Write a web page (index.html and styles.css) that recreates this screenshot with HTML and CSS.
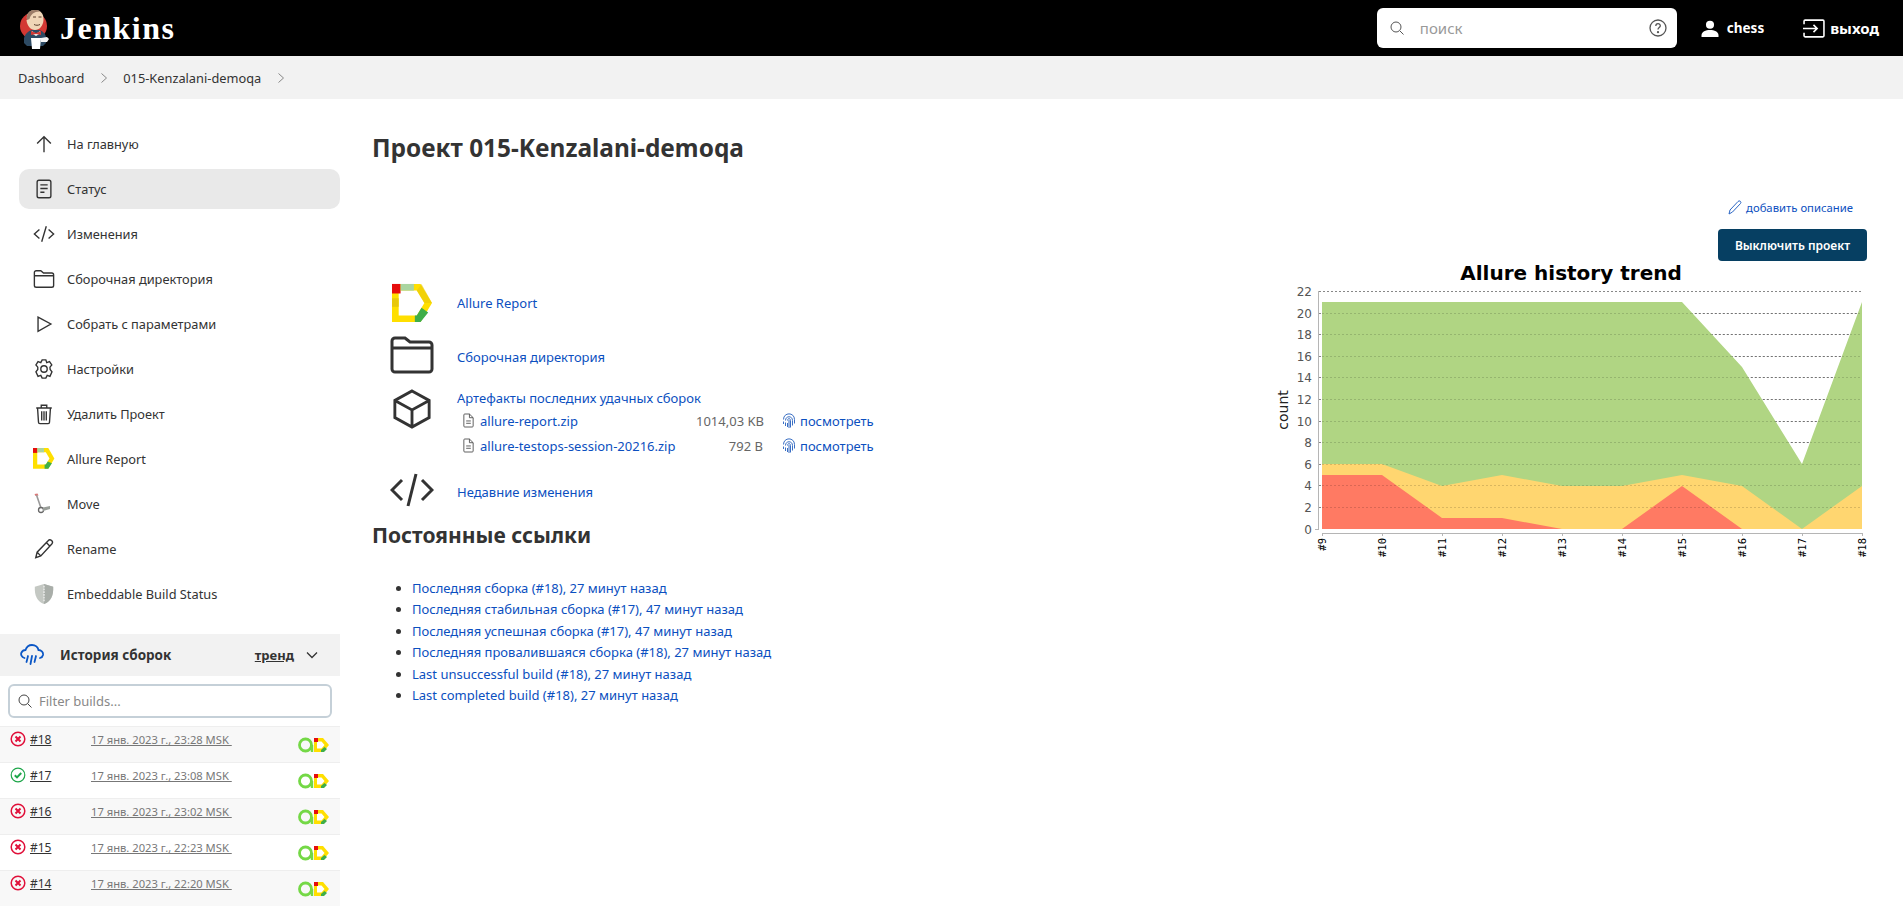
FILE: index.html
```html
<!DOCTYPE html>
<html>
<head>
  <title>015-Kenzalani-demoqa - Jenkins</title>
  <link rel="stylesheet" href="styles.css">
</head>
<body>

  <header class="topbar">
    <div class="brand">
      <svg class="butler" width="32" height="40" viewBox="0 0 32 40">
        <circle cx="14.5" cy="17" r="13.5" fill="#d33833"/>
        <path d="M5 29c1-4 4-7 8-8h7c4 1 7 4 7 8v5l-3 3H8l-3-3z" fill="#2d4a63"/>
        <path d="M13 22l4 3 4-3 1 2-5 3-5-3z" fill="#f2f2f2"/>
        <path d="M12 22l5 2 5-2v4l-5-1-5 1z" fill="#d33833"/>
        <path d="M8 11C7 4 11 1 16 1s9 3 8.500 10c-.4 6-4 10-8.500 10-4.200 0-8-4-8.500-10z" fill="#f0d6b7"/>
        <path d="M8 11C7 4 11 1 16 1c2 0 4 .5 5.500 1.500C16 2 11.500 5 10.500 10z" fill="#9c7d68"/>
        <path d="M14 8h3M19.500 8h3M15 15.500c2 1 4 1 6 0" fill="none" stroke="#5a3d2b"/>
        <path d="M12 29h10l-1 11h-8z" fill="#fff"/>
        <path d="M22 29l6-1 2 2-2 3-6 0z" fill="#f4f4f4"/>
      </svg>
      <span class="brand-name">Jenkins</span>
    </div>
    <div class="search">
      <svg width="16" height="16" viewBox="0 0 16 16" fill="none" stroke="#555"><circle cx="7" cy="7" r="5"/><path d="M11 11l3.500 3.500"/></svg>
      <span class="search-text">поиск</span>
      <svg width="18" height="18" viewBox="0 0 18 18" fill="none" stroke="#555" stroke-width="1.300"><circle cx="9" cy="9" r="8"/><path d="M6.800 7c0-3 4.500-3 4.500-.2 0 1.800-2.300 1.800-2.300 3.700"/><circle cx="9" cy="13.200" r=".5"/></svg>
    </div>
    <a class="top-link user">
      <svg width="18" height="17" viewBox="0 0 16 16" fill="#fff"><circle cx="8" cy="4.500" r="3.800"/><path d="M0 16v-1.500C0 11 4 9.500 8 9.500s8 1.500 8 5V16z"/></svg>
      chess
    </a>
    <a class="top-link logout">
      <svg width="22" height="19" viewBox="0 0 21 18" fill="none" stroke="#fff" stroke-width="1.500"><path d="M1 5V2a1 1 0 0 1 1-1h17a1 1 0 0 1 1 1v14a1 1 0 0 1-1 1H2a1 1 0 0 1-1-1v-3"/><path d="M0 9h13M10 5.500L13.500 9 10 12.500"/></svg>
      выход
    </a>
  </header>

  <nav class="breadcrumbs">
    <a>Dashboard</a>
    <svg width="8" height="12" viewBox="0 0 8 12" fill="none" stroke="#888"><path d="M1.500 1.500L6.500 6l-5 4.500"/></svg>
    <a>015-Kenzalani-demoqa</a>
    <svg width="8" height="12" viewBox="0 0 8 12" fill="none" stroke="#888"><path d="M1.500 1.500L6.500 6l-5 4.500"/></svg>
  </nav>

  <div class="page">
    <aside class="sidebar">
      <ul class="tasks">
        <li class="task">
          <svg class="task-icon" viewBox="0 0 24 24"><path d="M12 21V4M4.500 11.500L12 4l7.500 7.500"/></svg>
          На главную
        </li>
        <li class="task active">
          <svg class="task-icon" viewBox="0 0 24 24"><rect x="4.500" y="2.500" width="15" height="19" rx="2"/><path d="M8 7.500h8M8 11.500h8M8 15.500h4.500"/></svg>
          Статус
        </li>
        <li class="task">
          <svg class="task-icon" viewBox="0 0 24 24"><path d="M7 7l-5.500 5L7 17M17 7l5.500 5L17 17M14.500 3.500l-5 17"/></svg>
          Изменения
        </li>
        <li class="task">
          <svg class="task-icon" viewBox="0 0 24 24"><path d="M1.500 6V5a2 2 0 0 1 2-2h5l3 2.500h9a2 2 0 0 1 2 2V19a2 2 0 0 1-2 2h-17a2 2 0 0 1-2-2zM1.500 8.500h21"/></svg>
          Сборочная директория
        </li>
        <li class="task">
          <svg class="task-icon" viewBox="0 0 24 24"><path d="M5.500 4.500L19.500 12 5.500 20z"/></svg>
          Собрать с параметрами
        </li>
        <li class="task">
          <svg class="task-icon" viewBox="0 0 24 24"><circle cx="12" cy="12" r="3.500"/><path d="M10 2h4l1 3 3-1 2.500 3.500-2 2.500.2 2.500 2 2.500L18.500 20l-3-1-1.500 3h-4l-1.500-3-3 1L3.200 15l2-2.500V10l-2-2.500L5.500 4l3 1z"/></svg>
          Настройки
        </li>
        <li class="task">
          <svg class="task-icon" viewBox="0 0 24 24"><path d="M5 6l1 15a1.500 1.500 0 0 0 1.500 1.500h9A1.500 1.500 0 0 0 18 21l1-15M3.500 5.500h17M9 5V2.500h6V5M9.500 9v10M12 9v10M14.500 9v10"/></svg>
          Удалить Проект
        </li>
        <li class="task">
          <svg class="task-icon plain" viewBox="3 3 36 36"><path d="M3 3h25l10 17-10 17H3z" fill="#ffdf00"/><path d="M10 10h14l6 10-6 10H10z" fill="#fff"/><rect x="3" y="3" width="7" height="8" fill="#e60c0c"/><path d="M10 3h11v7H10z" fill="#a9d5a0"/><path d="M22 37v-7h2l3-5 7 3-6 9z" fill="#3fae49"/></svg>
          Allure Report
        </li>
        <li class="task">
          <svg class="task-icon plain" viewBox="0 0 22 22"><path d="M1.500 1l3-.5 1 2-3 .5z" fill="#d77"/><path d="M3.500 2L8 15" stroke="#9a9a9a" stroke-width="1.600"/><circle cx="8" cy="17" r="2.500" fill="#fff" stroke="#666" stroke-width="1.300"/><path d="M10 14.500l7-1.500v3l-7 2z" fill="#9a9f9a"/></svg>
          Move
        </li>
        <li class="task">
          <svg class="task-icon" viewBox="0 0 24 24"><path d="M3 21.500l1.500-6L16.500 3a2.500 2.500 0 0 1 4 3.500L8.500 19.500zM4.500 15.500l4 4M14.500 5l4 4"/></svg>
          Rename
        </li>
        <li class="task">
          <svg class="task-icon plain" viewBox="0 0 24 24"><path d="M12 1l10 3c.5 10-2.500 16-10 19C4.500 20 1.500 14 2 4z" fill="#c4c8c3"/><path d="M12 1l10 3c.5 10-2.500 16-10 19z" fill="#a9aea9"/><path d="M12 3v18" stroke="#eee" stroke-dasharray="2 1"/></svg>
          Embeddable Build Status
        </li>
      </ul>

      <section class="history">
        <div class="history-head">
          <svg width="24" height="22" viewBox="0 0 24 22" fill="none" stroke="#0b57c6" stroke-width="1.800" stroke-linecap="round"><path d="M4.500 14C1.500 13 .5 10.500 1.500 8.500s3-2.500 4-2.500C6.500 3 9 1 12 1c3.500 0 6 2.500 6.500 5 2.500 0 5 2 4.500 5-.3 1.500-1.300 2.500-3 3"/><path d="M8 12l-1.500 6M12 12l-1.500 8M16 12l-1.500 6"/></svg>
          <span class="history-title">История сборок</span>
          <a class="trend">тренд</a>
          <svg width="12" height="8" viewBox="0 0 12 8" fill="none" stroke="#333" stroke-width="1.300"><path d="M1 1.500l5 5 5-5"/></svg>
        </div>
        <div class="filter">
          <svg width="14" height="14" viewBox="0 0 14 14" fill="none" stroke="#444"><circle cx="6" cy="6" r="5"/><path d="M9.700 9.700L13.500 13.500"/></svg>
          Filter builds...
        </div>
        <div class="builds">
          <div class="build">
            <svg class="status" viewBox="0 0 16 16"><circle cx="8" cy="8" r="6.800" class="fail"/><path d="M5.500 5.500l5 5M10.500 5.500l-5 5" class="fail heavy"/></svg>
            <a class="build-num">#18</a>
            <a class="build-time">17 янв. 2023 г., 23:28 MSK&nbsp;</a>
            <svg class="allure-badge" viewBox="0 0 32 16"><use href="#badge"/></svg>
          </div>
          <div class="build">
            <svg class="status" viewBox="0 0 16 16"><circle cx="8" cy="8" r="6.800" class="ok"/><path d="M4.800 8.200l2.200 2.200 4.200-4.400" class="ok heavy"/></svg>
            <a class="build-num">#17</a>
            <a class="build-time">17 янв. 2023 г., 23:08 MSK&nbsp;</a>
            <svg class="allure-badge" viewBox="0 0 32 16"><use href="#badge"/></svg>
          </div>
          <div class="build">
            <svg class="status" viewBox="0 0 16 16"><circle cx="8" cy="8" r="6.800" class="fail"/><path d="M5.500 5.500l5 5M10.500 5.500l-5 5" class="fail heavy"/></svg>
            <a class="build-num">#16</a>
            <a class="build-time">17 янв. 2023 г., 23:02 MSK&nbsp;</a>
            <svg class="allure-badge" viewBox="0 0 32 16"><use href="#badge"/></svg>
          </div>
          <div class="build">
            <svg class="status" viewBox="0 0 16 16"><circle cx="8" cy="8" r="6.800" class="fail"/><path d="M5.500 5.500l5 5M10.500 5.500l-5 5" class="fail heavy"/></svg>
            <a class="build-num">#15</a>
            <a class="build-time">17 янв. 2023 г., 22:23 MSK&nbsp;</a>
            <svg class="allure-badge" viewBox="0 0 32 16"><use href="#badge"/></svg>
          </div>
          <div class="build">
            <svg class="status" viewBox="0 0 16 16"><circle cx="8" cy="8" r="6.800" class="fail"/><path d="M5.500 5.500l5 5M10.500 5.500l-5 5" class="fail heavy"/></svg>
            <a class="build-num">#14</a>
            <a class="build-time">17 янв. 2023 г., 22:20 MSK&nbsp;</a>
            <svg class="allure-badge" viewBox="0 0 32 16"><use href="#badge"/></svg>
          </div>
        </div>
      </section>
    </aside>

    <main class="main">
      <h1 class="page-title">Проект 015-Kenzalani-demoqa</h1>

      <div class="columns">
        <div class="left">
          <div class="link-row">
            <svg class="big-icon" viewBox="0 0 44 42"><path d="M1 1h30l12 20-12 20H1z" fill="#ffdf00"/><path d="M8 8h19l8 13-8 13H8z" fill="#fff"/><rect x="1" y="1" width="9" height="10" fill="#e60c0c"/><path d="M10 1h14v7H10z" fill="#a9d5a0"/><path d="M1 16h7v9H1z" fill="#e8c80c"/><path d="M27 8l5-7 11 20h-8z" fill="#e8c80c" opacity=".6"/><path d="M25 41v-7h2l5-8 7 5-8 10z" fill="#3fae49"/></svg>
            <a class="row-link">Allure Report</a>
          </div>
          <div class="link-row folder-row">
            <svg class="big-icon stroke" viewBox="0 0 44 38"><path d="M2 7V5a3 3 0 0 1 3-3h10l5 4h19a3 3 0 0 1 3 3v24a3 3 0 0 1-3 3H5a3 3 0 0 1-3-3zM2 12h40"/></svg>
            <a class="row-link">Сборочная директория</a>
          </div>
          <div class="link-row artifacts-row">
            <svg class="big-icon stroke" viewBox="0 0 44 42"><path d="M22 2l18 10v18L22 40 4 30V12zM4 12l18 10 18-10M22 22v18"/></svg>
            <div>
              <a class="row-link">Артефакты последних удачных сборок</a>
              <div class="artifact">
                <svg class="file-icon" viewBox="0 0 14 16"><path d="M3 1h5l4 4v9a1 1 0 0 1-1 1H3a1 1 0 0 1-1-1V2a1 1 0 0 1 1-1zM8 1v4h4M4.500 8.500h5M4.500 11h5"/></svg>
                <a class="artifact-name">allure-report.zip</a>
                <span class="artifact-size">1014,03 KB</span>
                <svg class="print-icon" viewBox="0 0 14 16"><path d="M1.500 7c0-7.500 11-7.500 11 0v4M3.500 8c0-5 7-5 7 0v5M5.500 8c0-2.500 3-2.500 3 0v7M7 7.500v8M1.500 9v2.500M3.500 10v3.500M5.500 10.500v4"/></svg>
                <a class="view-link">посмотреть</a>
              </div>
              <div class="artifact">
                <svg class="file-icon" viewBox="0 0 14 16"><path d="M3 1h5l4 4v9a1 1 0 0 1-1 1H3a1 1 0 0 1-1-1V2a1 1 0 0 1 1-1zM8 1v4h4M4.500 8.500h5M4.500 11h5"/></svg>
                <a class="artifact-name">allure-testops-session-20216.zip</a>
                <span class="artifact-size">792 B</span>
                <svg class="print-icon" viewBox="0 0 14 16"><path d="M1.500 7c0-7.500 11-7.500 11 0v4M3.500 8c0-5 7-5 7 0v5M5.500 8c0-2.500 3-2.500 3 0v7M7 7.500v8M1.500 9v2.500M3.500 10v3.500M5.500 10.500v4"/></svg>
                <a class="view-link">посмотреть</a>
              </div>
            </div>
          </div>
          <div class="link-row changes-row">
            <svg class="big-icon stroke" viewBox="0 0 44 36"><path d="M12 8L2 18l10 10M32 8l10 10-10 10M26 2l-8 32"/></svg>
            <a class="row-link">Недавние изменения</a>
          </div>

          <h2 class="section-title">Постоянные ссылки</h2>
          <ul class="permalinks">
            <li><a>Последняя сборка (#18), 27 минут назад</a></li>
            <li><a>Последняя стабильная сборка (#17), 47 минут назад</a></li>
            <li><a>Последняя успешная сборка (#17), 47 минут назад</a></li>
            <li><a>Последняя провалившаяся сборка (#18), 27 минут назад</a></li>
            <li><a>Last unsuccessful build (#18), 27 минут назад</a></li>
            <li><a>Last completed build (#18), 27 минут назад</a></li>
          </ul>
        </div>

        <div class="right">
          <a class="add-desc">
            <svg width="14" height="15" viewBox="0 0 14 15" fill="none" stroke="#2b66c4"><path d="M1 14l1-4L10 1.500a1.500 1.500 0 0 1 2.500 2L4.500 12z"/></svg>
            добавить описание
          </a>
          <button class="disable-btn">Выключить проект</button>
          <svg class="chart" width="600" height="320" viewBox="0 0 600 320">
            <text class="chart-title" x="301" y="36" text-anchor="middle">Allure history trend</text>
            <path class="grid" d="M49 47.500H592M49 69.500H592M49 90.500H592M49 112.500H592M49 133.500H592M49 155.500H592M49 177.500H592M49 198.500H592M49 220.500H592M49 241.500H592M49 263.500H592"/>
            <polygon class="area-pass" points="52,58 412,58 472,123 532,220 592,58 592,285 52,285"/>
            <polygon class="area-broken" points="52,220 112,220 172,242 232,231 292,242 352,242 412,231 472,242 532,285 592,242 592,285 52,285"/>
            <polygon class="area-fail" points="52,231 112,231 172,274 232,274 292,285 352,285 412,242 472,285 52,285"/>
            <path class="grid-over" d="M52 69.500H592M52 90.500H592M52 112.500H592M52 133.500H592M52 155.500H592M52 177.500H592M52 198.500H592M52 220.500H592M52 241.500H592M52 263.500H592"/>
            <path class="axis" d="M48.500 47V286M45 285.500h3M52 289.500H592M52.500 289v3M112.500 289v3M172.500 289v3M232.500 289v3M292.500 289v3M352.500 289v3M412.500 289v3M472.500 289v3M532.500 289v3M592.500 289v3"/>
            <g class="y-labels" text-anchor="end">
              <text x="42" y="52">22</text><text x="42" y="74">20</text><text x="42" y="95">18</text><text x="42" y="117">16</text><text x="42" y="138">14</text><text x="42" y="160">12</text><text x="42" y="182">10</text><text x="42" y="203">8</text><text x="42" y="225">6</text><text x="42" y="246">4</text><text x="42" y="268">2</text><text x="42" y="290">0</text>
            </g>
            <text class="y-title" transform="translate(18 166) rotate(-90)" text-anchor="middle">count</text>
            <g class="x-labels" text-anchor="end">
              <text transform="translate(56 294) rotate(-90)">#9</text>
              <text transform="translate(116 294) rotate(-90)">#10</text>
              <text transform="translate(176 294) rotate(-90)">#11</text>
              <text transform="translate(236 294) rotate(-90)">#12</text>
              <text transform="translate(296 294) rotate(-90)">#13</text>
              <text transform="translate(356 294) rotate(-90)">#14</text>
              <text transform="translate(416 294) rotate(-90)">#15</text>
              <text transform="translate(476 294) rotate(-90)">#16</text>
              <text transform="translate(536 294) rotate(-90)">#17</text>
              <text transform="translate(596 294) rotate(-90)">#18</text>
            </g>
          </svg>
        </div>
      </div>
    </main>
  </div>

  <svg class="defs" width="0" height="0">
    <symbol id="badge" viewBox="0 0 32 16">
      <circle cx="7.500" cy="8" r="6" fill="none" stroke="#74d846" stroke-width="2.800"/>
      <path d="M14 8v7" stroke="#74d846" stroke-width="2.400"/>
      <path d="M16 1h9l6 7-6 7h-9z" fill="#ffdf00"/>
      <path d="M19 4.500h4.500l3 3.500-3 3.500H19z" fill="#fff"/>
      <rect x="16" y="1" width="4" height="4" fill="#e60c0c"/>
      <path d="M23 15v-2l3.500-3 2.500 2-3 3z" fill="#3fae49"/>
    </symbol>
  </svg>

</body>
</html>
```

FILE: styles.css
```css
* {
  box-sizing: border-box;
}
body {
  margin: 0;
  font-family: "Noto Sans", Arial, sans-serif;
  font-size: 13px;
  color: #333;
  background: #fff;
  height: 908px;
  overflow: hidden;
}
a {
  color: #0b4fc0;
}

/* header */
.topbar {
  background: #000;
  height: 56px;
  display: flex;
  align-items: center;
  color: #fff;
  padding: 0 24px 0 19px;
}
.brand {
  display: flex;
  align-items: center;
  gap: 9px;
  margin-right: auto;
}
.butler {
  margin-top: 2px;
}
.brand-name {
  font-family: "Liberation Serif", serif;
  font-weight: bold;
  font-size: 32px;
  letter-spacing: 1.5px;
}
.search {
  background: #fff;
  width: 300px;
  height: 40px;
  border-radius: 6px;
  display: flex;
  align-items: center;
  padding: 0 10px 0 12px;
  margin-right: 24px;
}
.search-text {
  color: #999;
  font-size: 15px;
  margin-left: 15px;
  flex: 1;
}
.top-link {
  color: #fff;
  font-weight: 700;
  display: flex;
  align-items: center;
  gap: 8px;
}
.user {
  font-size: 13.5px;
  margin-right: 39px;
}
.logout {
  font-size: 15px;
  gap: 5px;
}

/* breadcrumb bar */
.breadcrumbs {
  background: #f2f2f2;
  height: 43px;
  display: flex;
  align-items: center;
  padding-left: 18px;
  gap: 15.5px;
  font-size: 12.8px;
}
.breadcrumbs a {
  color: #333;
}

.page {
  display: flex;
}

/* left side */
.sidebar {
  width: 340px;
  flex: none;
  padding-top: 25px;
}
.tasks {
  list-style: none;
  margin: 0;
  padding: 0 0 0 19px;
  font-size: 12.8px;
}
.task {
  height: 40px;
  margin-bottom: 5px;
  display: flex;
  align-items: center;
  padding-left: 14px;
  gap: 12px;
  border-radius: 10px;
}
.task.active {
  background: #e9e9e9;
}
.task-icon {
  width: 22px;
  height: 22px;
  flex: none;
  fill: none;
  stroke: #333;
  stroke-width: 1.5;
}
.task-icon.plain {
  stroke: none;
}

/* build history */
.history {
  margin-top: 20px;
}
.history-head {
  background: #f2f2f2;
  height: 42px;
  display: flex;
  align-items: center;
  padding: 0 22px 0 20px;
}
.history-title {
  font-weight: 700;
  font-size: 13.5px;
  margin-left: 16px;
  flex: 1;
}
.trend {
  font-weight: 700;
  color: #333;
  text-decoration: underline;
  margin-right: 12px;
}
.filter {
  margin: 8px;
  height: 34px;
  border: 2px solid #c5d0d8;
  border-radius: 6px;
  display: flex;
  align-items: center;
  gap: 7px;
  padding-left: 8px;
  color: #888;
}
.build {
  height: 36px;
  display: flex;
  align-items: flex-start;
  border-top: 1px solid #eee;
  padding: 4px 10px 0;
  line-height: 18px;
}
.build:nth-child(odd) {
  background: #f8f8f8;
}
.status {
  width: 16px;
  height: 16px;
  flex: none;
  fill: none;
}
.fail {
  stroke: #e0103a;
  stroke-width: 1.5;
}
.ok {
  stroke: #1ea64a;
  stroke-width: 1.2;
}
.heavy {
  stroke-width: 2;
}
.build-num {
  color: #333;
  text-decoration: underline;
  font-size: 12px;
  margin-left: 4px;
  width: 61px;
}
.build-time {
  color: #777;
  text-decoration: underline;
  font-size: 11.2px;
  flex: 1;
  white-space: nowrap;
}
.allure-badge {
  width: 32px;
  height: 16px;
  margin-top: 6px;
}

/* main column */
.main {
  flex: 1;
  padding: 33px 36px 0 32px;
}
.page-title {
  font-size: 24.4px;
  font-weight: 700;
  line-height: 32px;
  margin: 0;
}
.columns {
  display: flex;
  justify-content: space-between;
  margin-top: 36px;
}
.left {
  padding-top: 83px;
}
.link-row {
  display: flex;
  align-items: center;
  padding-left: 18px;
  margin-bottom: 12px;
}
.big-icon {
  width: 44px;
  height: 40px;
  margin-right: 23px;
  flex: none;
}
.big-icon.stroke {
  fill: none;
  stroke: #333;
  stroke-width: 3;
}
.folder-row {
  margin-bottom: 14px;
}
.folder-row .row-link,
.changes-row .row-link {
  margin-top: 4px;
}
.artifacts-row {
  align-items: flex-start;
}
.changes-row {
  margin-bottom: 10px;
}
.artifact {
  display: flex;
  align-items: center;
  height: 25px;
  margin-left: 5px;
}
.artifact:first-of-type {
  margin-top: 1px;
}
.file-icon {
  width: 13px;
  height: 15px;
  fill: none;
  stroke: #555;
  margin-right: 5px;
}
.artifact-name {
  width: 216px;
  white-space: nowrap;
}
.artifact-size {
  width: 67px;
  text-align: right;
  color: #666;
  white-space: nowrap;
}
.print-icon {
  width: 14px;
  height: 17px;
  margin-left: 19px;
  fill: none;
  stroke: #3a6fc4;
}
.view-link {
  margin-left: 4px;
}
.section-title {
  font-size: 21px;
  font-weight: 700;
  margin: 0;
  line-height: 30px;
}
.permalinks {
  margin: 28px 0 0;
  padding-left: 40px;
}
.permalinks li {
  line-height: 21.4px;
}

/* right column */
.right {
  width: 600px;
  display: flex;
  flex-direction: column;
  align-items: flex-end;
}
.add-desc {
  font-size: 11.3px;
  display: flex;
  align-items: center;
  gap: 4px;
  margin-right: 14px;
}
.disable-btn {
  background: #063f62;
  color: #fff;
  border: none;
  border-radius: 4px;
  font-family: inherit;
  font-weight: 600;
  font-size: 12px;
  width: 149px;
  height: 32px;
  margin-top: 14px;
}
.chart {
  margin: -17px -3px 0 0;
}
.chart-title {
  font-family: "DejaVu Sans", sans-serif;
  font-weight: bold;
  font-size: 20px;
  fill: #000;
}
.grid {
  fill: none;
  stroke: #888;
  stroke-dasharray: 2 2;
}
.grid-over {
  fill: none;
  stroke: rgba(0,0,0,.15);
  stroke-dasharray: 2 2;
}
.area-pass {
  fill: #b0d583;
}
.area-broken {
  fill: #ffd670;
}
.area-fail {
  fill: #ff7a63;
}
.axis {
  fill: none;
  stroke: #b5b5b5;
}
.y-labels text {
  font-family: "DejaVu Sans", sans-serif;
  font-size: 12px;
  fill: #555;
}
.y-title {
  font-family: "DejaVu Sans", sans-serif;
  font-size: 14px;
  fill: #222;
}
.x-labels text {
  font-family: "DejaVu Sans Mono", monospace;
  font-size: 10.5px;
  fill: #000;
}
.defs {
  position: absolute;
}
```
